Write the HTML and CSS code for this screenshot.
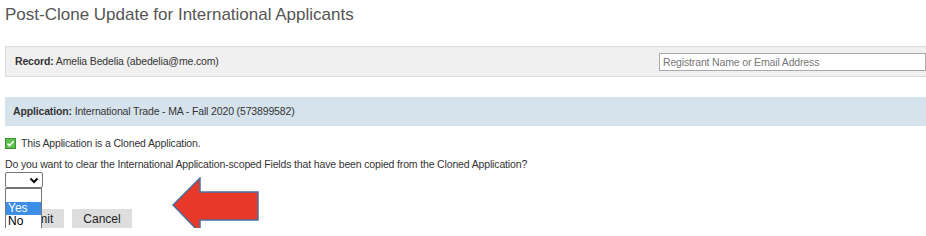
FILE: index.html
```html
<!DOCTYPE html>
<html lang="en">
<head>
    <meta charset="UTF-8">
    <title>Post-Clone Update for International Applicants</title>
    <link rel="stylesheet" href="styles.css">
</head>
<body>

<h1 class="page-title">Post-Clone Update for International Applicants</h1>

<div class="record-bar">
    <span><b>Record:</b> Amelia Bedelia (abedelia@me.com)</span>
    <input class="search-box" type="text" placeholder="Registrant Name or Email Address">
</div>

<div class="app-bar">
    <b>Application:</b> International Trade - MA - Fall 2020 (573899582)
</div>

<p class="cloned">
    <span class="check-box">
        <svg width="11" height="11" viewBox="0 0 11 11">
            <rect x="0.5" y="0.5" width="10" height="10" fill="#5fbf4f" stroke="#3c8f34"/>
            <path d="M2.5 5.6 L4.5 7.6 L8.6 3.2" fill="none" stroke="#fff" stroke-width="1.5"/>
        </svg>
    </span>
    This Application is a Cloned Application.
</p>

<p class="question">Do you want to clear the International Application-scoped Fields that have been copied from the Cloned Application?</p>

<div class="form-area">
    <div class="select-wrap">
        <div class="select-box">
            <svg width="10" height="7" viewBox="0 0 10 7"><path d="M1.5 1.5 L5 5 L8.5 1.5" fill="none" stroke="#000" stroke-width="2"/></svg>
        </div>
        <ul class="select-list">
            <li></li>
            <li class="active">Yes</li>
            <li>No</li>
        </ul>
    </div>

    <div class="buttons">
        <button class="btn">Submit</button>
        <button class="btn">Cancel</button>
    </div>

    <svg class="arrow" width="92" height="60" viewBox="0 0 92 60">
        <polygon points="1,28 28,1 28,15 86,15 86,43 28,43 28,56" fill="#e8382a" stroke="#4a6fa0" stroke-width="1.5"/>
    </svg>
</div>

</body>
</html>
```

FILE: styles.css
```css
body {
    font-family: "Liberation Sans", Tahoma, sans-serif;
    font-size: 10.5px;
    letter-spacing: -0.15px;
    line-height: 15px;
    color: #333;
    margin: 0;
    padding: 0 0 0 5px;
    background-color: #fff;
}
.page-title {
    font-size: 17px;
    font-weight: normal;
    letter-spacing: 0;
    line-height: 20px;
    color: #555;
    margin: 0;
    padding-top: 5px;
    height: 41px;
}
.record-bar {
    display: flex;
    justify-content: space-between;
    align-items: center;
    height: 29px;
    padding-left: 9px;
    background-color: #f0f0f0;
    border-top: 1px solid #dcdcdc;
    border-bottom: 1px solid #dcdcdc;
    border-left: 1px solid #dcdcdc;
}
.search-box {
    width: 267px;
    height: 18px;
    box-sizing: border-box;
    border: 1px solid #a9a9a9;
    font-family: inherit;
    font-size: 10.5px;
    letter-spacing: -0.15px;
    padding: 0 3px;
    margin: 0;
}
.search-box::placeholder {
    color: #777;
}
.app-bar {
    margin-top: 20px;
    height: 29px;
    line-height: 29px;
    padding-left: 8px;
    background-color: #d6e3ec;
}
.cloned {
    margin: 10px 0 0 0;
    display: flex;
    align-items: center;
    gap: 5px;
}
.check-box {
    display: flex;
}
.question {
    margin: 6px 0 0 0;
}
.form-area {
    position: relative;
}
.select-wrap {
    width: 38px;
}
.select-box {
    height: 14px;
    border: 1px solid #767676;
    border-radius: 2px;
    display: flex;
    justify-content: flex-end;
    align-items: center;
    padding-right: 3px;
}
.select-list {
    position: absolute;
    top: 16px;
    left: 0;
    z-index: 2;
    width: 35px;
    margin: 0;
    padding: 0;
    list-style: none;
    background: #fff;
    border: 1px solid #767676;
    font-family: Arial, "Liberation Sans", sans-serif;
    font-size: 12px;
    letter-spacing: 0;
    color: #000;
}
.select-list li {
    height: 13px;
    line-height: 13px;
    padding-left: 2px;
}
.select-list li.active {
    background-color: #3d8ee6;
    color: #fff;
}
.buttons {
    display: flex;
    gap: 8px;
    margin-top: 21px;
}
.btn {
    background-color: #dedede;
    border: none;
    height: 19px;
    padding: 0 11px;
    font-family: Arial, "Liberation Sans", sans-serif;
    font-size: 12px;
    letter-spacing: 0;
    color: #222;
}
.arrow {
    position: absolute;
    left: 167px;
    top: 5px;
}
```
